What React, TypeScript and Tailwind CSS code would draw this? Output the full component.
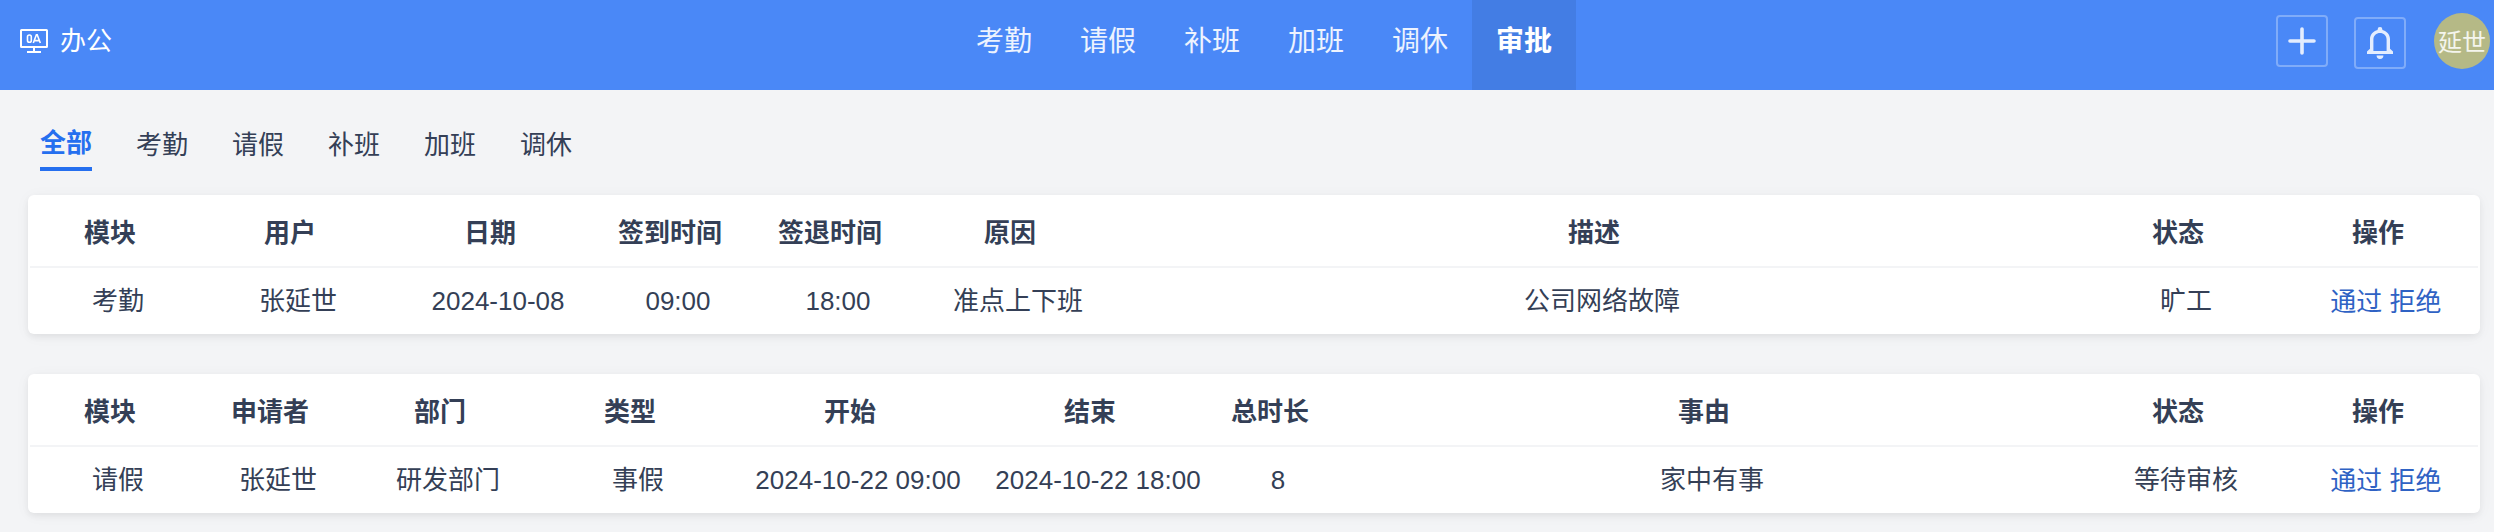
const navItems = ["考勤", "请假", "补班", "加班", "调休", "审批"];
const tabs = ["全部", "考勤", "请假", "补班", "加班", "调休"];

type Column = { title: string; width: string };

const attendanceColumns: Column[] = [
  { title: "模块",     width: "w-[160px]" },
  { title: "用户",     width: "w-[200px]" },
  { title: "日期",     width: "w-[200px]" },
  { title: "签到时间", width: "w-[160px]" },
  { title: "签退时间", width: "w-[160px]" },
  { title: "原因",     width: "w-[200px]" },
  { title: "描述",     width: "w-auto" },
  { title: "状态",     width: "w-[200px]" },
  { title: "操作",     width: "w-[200px]" },
];

const leaveColumns: Column[] = [
  { title: "模块",   width: "w-[160px]" },
  { title: "申请者", width: "w-[160px]" },
  { title: "部门",   width: "w-[180px]" },
  { title: "类型",   width: "w-[200px]" },
  { title: "开始",   width: "w-[240px]" },
  { title: "结束",   width: "w-[240px]" },
  { title: "总时长", width: "w-[120px]" },
  { title: "事由",   width: "w-auto" },
  { title: "状态",   width: "w-[200px]" },
  { title: "操作",   width: "w-[200px]" },
];

const attendanceRows = [
  ["考勤", "张延世", "2024-10-08", "09:00", "18:00", "准点上下班", "公司网络故障", "旷工"],
];

const leaveRows = [
  ["请假", "张延世", "研发部门", "事假", "2024-10-22 09:00", "2024-10-22 18:00", "8", "家中有事", "等待审核"],
];

function LogoIcon() {
  return (
    <svg width="28" height="24" viewBox="0 0 28 24" fill="none" stroke="currentColor" aria-hidden="true">
      <rect x="1" y="1" width="26" height="17" rx="0.5" strokeWidth="2" />
      <path d="M14 18v4M7 23h14" strokeWidth="2" />
      <rect x="7.500" y="6" width="3.800" height="7.300" rx="1.800" strokeWidth="1.600" />
      <path d="M13.300 14L16.400 5.800h0.800L20.300 14M14.600 11.600h4.600" strokeWidth="1.600" />
    </svg>
  );
}

function PlusIcon() {
  return (
    <svg width="28" height="28" viewBox="0 0 28 28" fill="none" stroke="currentColor" aria-hidden="true">
      <path d="M14 2v24M2 14h24" strokeWidth="3.600" strokeLinecap="round" />
    </svg>
  );
}

function BellIcon() {
  return (
    <svg width="28" height="32" viewBox="0 0 28 32" fill="currentColor" aria-hidden="true">
      <path
        fillRule="evenodd"
        d="M14 0a2.400 2.400 0 0 1 2.400 2.400v0.500C20.800 4 24 7.600 24 12v9.800l3 2.700v2.500H1v-2.500L4 21.800V12c0-4.400 3.200-8 7.600-9.100V2.400A2.400 2.400 0 0 1 14 0zM14 6c-3.600 0-6.600 2.700-6.600 6.400V24h13.200V12.400c0-3.700-3-6.400-6.600-6.400z"
      />
      <path d="M10.600 28.600h6.800a3.400 3.400 0 0 1-6.800 0z" />
    </svg>
  );
}

function ApprovalTable({ label, columns, rows }: { label: string; columns: Column[]; rows: string[][] }) {
  return (
    <div className="rounded-md bg-white px-0.5 shadow-[0_2px_16px_rgba(0,0,0,0.04),0_3px_6px_rgba(0,0,0,0.06)]">
      <table aria-label={label} className="w-full table-fixed border-separate border-spacing-0 text-center">
        <thead>
          <tr className="h-[73px]">
            {columns.map((col) => (
              <th key={col.title} scope="col" className={`${col.width} border-b-2 border-gray-100 p-0 pt-1 font-bold`}>
                {col.title}
              </th>
            ))}
          </tr>
        </thead>
        <tbody>
          {rows.map((row, i) => (
            <tr key={i} className="h-[66px]">
              {row.map((cell, j) => (
                <td key={j} className="p-0 pl-4 whitespace-nowrap">{cell}</td>
              ))}
              <td className="p-0 pt-0.5 pl-4 whitespace-nowrap text-[#2f62c4]">
                <button type="button">通过</button> <button type="button">拒绝</button>
              </td>
            </tr>
          ))}
        </tbody>
      </table>
    </div>
  );
}

export default function App() {
  return (
    <div className="min-h-screen bg-gray-100 font-['Liberation_Sans','Noto_Sans_CJK_SC',sans-serif] text-[26px] leading-8 text-[#343f56]" lang="zh-CN">
      <header className="flex h-[90px] bg-[#4a88f7] text-white">
        <div className="flex h-[82px] flex-1 items-center gap-3 pl-5">
          <LogoIcon />
          <span>办公</span>
        </div>

        <nav className="flex pl-[18px] text-[28px]">
          {navItems.map((item) => (
            <a
              key={item}
              href="#"
              className={`flex items-center px-6 pb-1.5 ${
                item === "审批" ? "bg-[#437de4] font-bold" : "text-white/90"
              }`}
            >
              {item}
            </a>
          ))}
        </nav>

        <div className="flex flex-1 items-start justify-end pt-[13px] pr-1 text-white/85">
          <button type="button" aria-label="新增" className="mt-0.5 mr-[26px] flex size-[52px] items-center justify-center rounded-sm border-2 border-white/30">
            <PlusIcon />
          </button>
          <button type="button" aria-label="通知" className="mt-1 mr-7 flex size-[52px] items-center justify-center rounded-sm border-2 border-white/30">
            <BellIcon />
          </button>
          <button type="button" className="flex size-14 items-center justify-center rounded-full bg-[#b5b986] pt-1 text-2xl whitespace-nowrap">
            延世
          </button>
        </div>
      </header>

      <main className="pr-3.5 pl-7">
        <nav className="flex gap-11 pt-[37px] pb-6 pl-3">
          {tabs.map((tab) => (
            <a
              key={tab}
              href="#"
              className={tab === "全部" ? "border-b-4 border-[#256fef] pb-2 font-bold text-[#256fef]" : "pt-0.5"}
            >
              {tab}
            </a>
          ))}
        </nav>

        <div className="flex flex-col gap-10 pb-5">
          <ApprovalTable label="考勤审批" columns={attendanceColumns} rows={attendanceRows} />
          <ApprovalTable label="请假审批" columns={leaveColumns} rows={leaveRows} />
        </div>
      </main>
    </div>
  );
}
